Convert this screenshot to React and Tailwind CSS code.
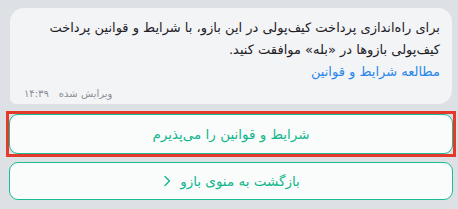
import React from 'react';

const font = { fontFamily: '"DejaVu Sans", "Noto Sans", sans-serif' };

export default function App() {
  return (
    <div className="w-[458px] h-[209px] bg-[#dde0e4] overflow-hidden flex flex-col" style={font}>
      {/* message bubble */}
      <div dir="rtl" className="ml-[10px] mt-[8px] w-[442px] h-[96px] bg-[#f3f4f6] rounded-[14px] rounded-bl-[6px] pr-[12px] pl-[14px] pt-[9px] flex flex-col">
        <p className="text-[13px] leading-[22px] text-[#1e2126]">
          برای راه‌اندازی پرداخت کیف‌پولی در این بازو، با شرایط و قوانین پرداخت کیف‌پولی بازوها در «بله» موافقت کنید.
        </p>
        <p className="text-[13px] leading-[21px] text-[#2a86ea]">مطالعه شرایط و قوانین</p>
        <div className="mt-auto mb-[3px] flex justify-end gap-[10px] text-[10px] text-[#8a8f96]">
          <span>ویرایش شده</span>
          <span>۱۴:۳۹</span>
        </div>
      </div>

      {/* highlighted accept button */}
      <div className="ml-[6px] mt-[7px] w-[450px] h-[46px] border-[3px] border-[#e5392c]">
        <button dir="rtl" className="w-full h-full bg-[#fafcfc] border border-[#19bd93] rounded-[9px] text-[13.5px] text-[#13b68b]">
          شرایط و قوانین را می‌پذیرم
        </button>
      </div>

      {/* back button */}
      <button dir="rtl" className="ml-[9px] mt-[5px] w-[444px] h-[38px] bg-[#fafcfc] border border-[#19bd93] rounded-[9px] text-[13.5px] text-[#13b68b] flex items-center justify-center gap-[8px]">
        <span>بازگشت به منوی بازو</span>
        <svg width="10" height="12" viewBox="0 0 10 12" fill="none" stroke="#13b68b" strokeWidth="1.4" strokeLinecap="round" strokeLinejoin="round">
          <path d="M3 1.5 L7.5 6 L3 10.5" />
        </svg>
      </button>
    </div>
  );
}
